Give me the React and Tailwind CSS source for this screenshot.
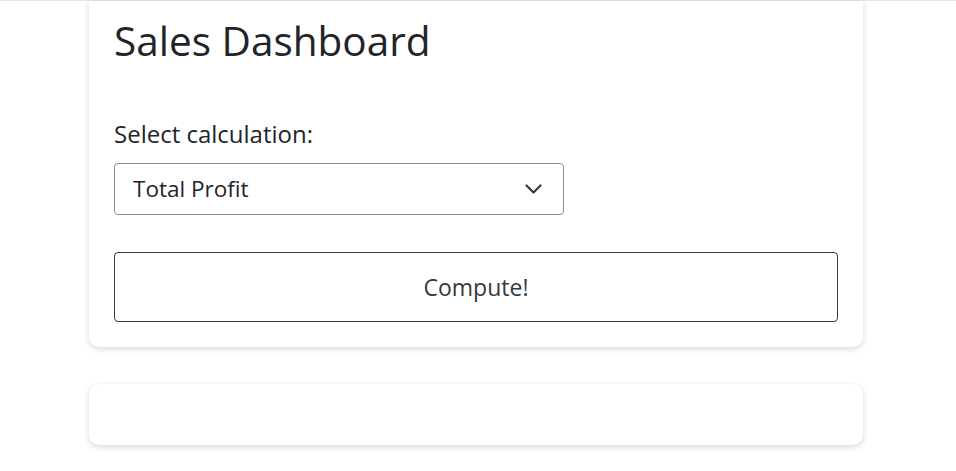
const App = () => {
  return (
    <div className="min-h-screen bg-white font-['Open_Sans',sans-serif] text-[#212529]">
      <div className="h-px bg-[#e3e5e8]" />
      <div className="ml-[89px] w-[774px]">
        <div className="rounded-b-[10px] bg-white px-[25px] pt-[16px] pb-[25px] shadow-[0_2px_6px_rgba(0,0,0,0.16)]">
          <h1 className="text-[40.5px] leading-[48px] font-normal">Sales Dashboard</h1>

          <label className="mt-[54px] block text-[24px] leading-[30px]">Select calculation:</label>
          <div className="relative mt-[14px] w-[450px]">
            <select className="h-[52px] w-full appearance-none rounded-[4px] border border-[#8a8f96] bg-white pl-[18px] text-[22.5px] text-[#212529] outline-none">
              <option>Total Profit</option>
              <option>Total Revenue</option>
              <option>Average Order Value</option>
            </select>
            {/* chevron */}
            <svg
              className="pointer-events-none absolute top-[21px] right-[22px] h-[10px] w-[17px] text-[#343a40]"
              viewBox="0 0 17 10"
              fill="none"
              stroke="currentColor"
              strokeWidth="2.2"
              strokeLinecap="round"
              strokeLinejoin="round"
            >
              <polyline points="1.5,1.5 8.5,8.5 15.5,1.5" />
            </svg>
          </div>

          <button className="mt-[37px] h-[70px] w-full rounded-[4px] border border-[#343a40] bg-white text-[23px] text-[#343a40]">
            Compute!
          </button>
        </div>

        <div className="mt-[37px] h-[61px] rounded-[10px] bg-white shadow-[0_2px_6px_rgba(0,0,0,0.16)]" />
      </div>
    </div>
  );
};

export default App;
